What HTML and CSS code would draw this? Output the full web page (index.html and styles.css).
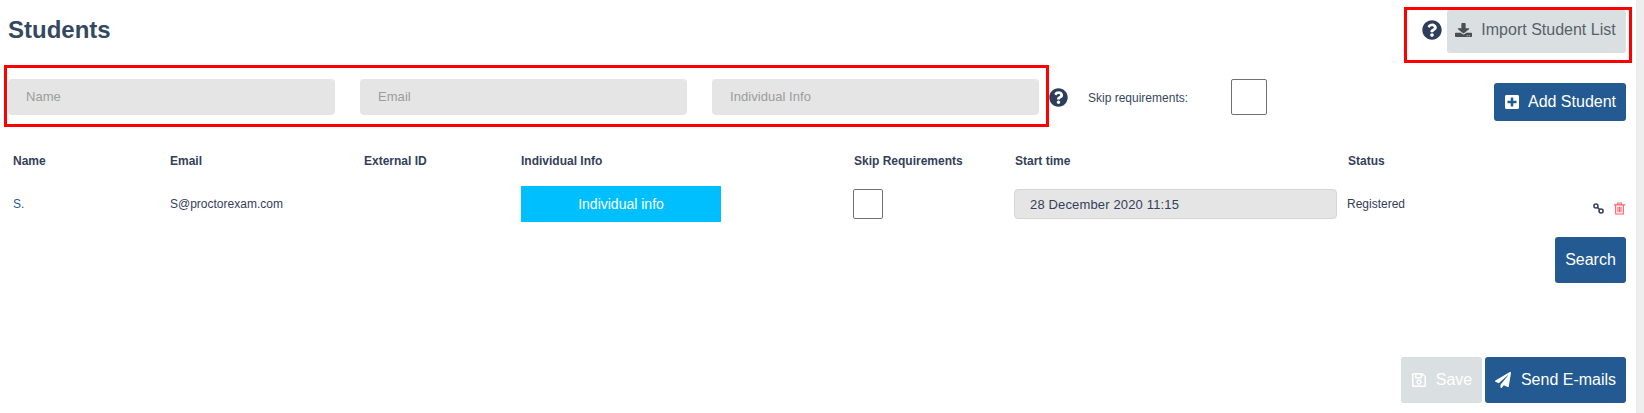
FILE: index.html
```html
<!DOCTYPE html>
<html lang="en">
<head>
  <meta charset="UTF-8" />
  <meta name="viewport" content="width=device-width, initial-scale=1.0"/>
  <title>Students</title>
  <link rel="stylesheet" href="styles.css">
</head>
<body>

<div class="page">
  <div class="content">

    <div class="top-row">
      <h1>Students</h1>
      <div class="import-group">
        <svg class="help-icon help-large" viewBox="0 0 512 512"><path d="M504 256c0 136.997-111.043 248-248 248S8 392.997 8 256C8 119.083 119.043 8 256 8s248 111.083 248 248zM262.655 90c-54.497 0-89.255 22.957-116.549 63.758-3.536 5.286-2.353 12.415 2.715 16.258l34.699 26.31c5.205 3.947 12.621 3.008 16.665-2.122 17.864-22.658 30.113-35.797 57.303-35.797 20.429 0 45.698 13.148 45.698 32.958 0 14.976-12.363 22.667-32.534 33.976C247.128 238.528 216 254.941 216 296v4c0 6.627 5.373 12 12 12h56c6.627 0 12-5.373 12-12v-1.333c0-28.462 83.186-29.647 83.186-106.667 0-58.002-60.165-102-116.531-102zM256 338c-25.365 0-46 20.635-46 46 0 25.364 20.635 46 46 46s46-20.636 46-46c0-25.365-20.635-46-46-46z"/></svg>
        <button class="btn btn-grey btn-import">
          <svg class="btn-icon icon-download" viewBox="0 0 512 512" preserveAspectRatio="none"><path d="M216 0h80c13.3 0 24 10.7 24 24v168h87.7c17.8 0 26.7 21.5 14.1 34.1L269.7 378.3c-7.5 7.5-19.8 7.5-27.3 0L90.1 226.1c-12.6-12.6-3.7-34.1 14.1-34.1H192V24c0-13.3 10.7-24 24-24zm296 376v112c0 13.3-10.7 24-24 24H24c-13.3 0-24-10.7-24-24V376c0-13.3 10.7-24 24-24h146.7l49 49c20.1 20.1 52.5 20.1 72.6 0l49-49H488c13.3 0 24 10.7 24 24zm-124 88c0-11-9-20-20-20s-20 9-20 20 9 20 20 20 20-9 20-20zm64 0c0-11-9-20-20-20s-20 9-20 20 9 20 20 20 20-9 20-20z"/></svg>
          Import Student List
        </button>
      </div>
    </div>

    <div class="filter-row">
      <input class="filter-input" type="text" placeholder="Name">
      <input class="filter-input" type="text" placeholder="Email">
      <input class="filter-input" type="text" placeholder="Individual Info">
      <svg class="help-icon help-small" viewBox="0 0 512 512"><path d="M504 256c0 136.997-111.043 248-248 248S8 392.997 8 256C8 119.083 119.043 8 256 8s248 111.083 248 248zM262.655 90c-54.497 0-89.255 22.957-116.549 63.758-3.536 5.286-2.353 12.415 2.715 16.258l34.699 26.31c5.205 3.947 12.621 3.008 16.665-2.122 17.864-22.658 30.113-35.797 57.303-35.797 20.429 0 45.698 13.148 45.698 32.958 0 14.976-12.363 22.667-32.534 33.976C247.128 238.528 216 254.941 216 296v4c0 6.627 5.373 12 12 12h56c6.627 0 12-5.373 12-12v-1.333c0-28.462 83.186-29.647 83.186-106.667 0-58.002-60.165-102-116.531-102zM256 338c-25.365 0-46 20.635-46 46 0 25.364 20.635 46 46 46s46-20.636 46-46c0-25.365-20.635-46-46-46z"/></svg>
      <span class="skip-label">Skip requirements:</span>
      <input class="check check-large" type="checkbox">
      <button class="btn btn-blue btn-add">
        <svg class="btn-icon" viewBox="0 0 448 512"><path d="M400 32H48C21.5 32 0 53.5 0 80v352c0 26.5 21.5 48 48 48h352c26.5 0 48-21.5 48-48V80c0-26.5-21.5-48-48-48zm-32 252c0 6.6-5.4 12-12 12h-92v92c0 6.6-5.4 12-12 12h-56c-6.6 0-12-5.4-12-12v-92H92c-6.6 0-12-5.4-12-12v-56c0-6.6 5.4-12 12-12h92v-92c0-6.6 5.4-12 12-12h56c6.6 0 12 5.4 12 12v92h92c6.6 0 12 5.4 12 12v56z"/></svg>
        Add Student
      </button>
    </div>

    <div class="students-grid">
      <div class="col-head">Name</div>
      <div class="col-head">Email</div>
      <div class="col-head">External ID</div>
      <div class="col-head">Individual Info</div>
      <div class="col-head">Skip Requirements</div>
      <div class="col-head">Start time</div>
      <div class="col-head">Status</div>
      <div></div>

      <div class="cell cell-name">S.</div>
      <div class="cell">S@proctorexam.com</div>
      <div class="cell"></div>
      <div class="cell"><button class="btn-info">Individual info</button></div>
      <div class="cell"><input class="check check-small" type="checkbox"></div>
      <div class="cell"><input class="date-input" type="text" value="28 December 2020 11:15" readonly></div>
      <div class="cell cell-status">Registered</div>
      <div class="cell cell-actions">
        <svg class="action-icon" viewBox="0 0 12 12" fill="none" stroke="#34405a" stroke-width="1.7"><circle cx="3.2" cy="3.2" r="2.2"/><circle cx="8.8" cy="8.8" r="2.2"/><path d="M4.6 4.6l2.8 2.8"/></svg>
        <svg class="action-icon" viewBox="0 0 12 14" fill="none" stroke="#ff5f6b" stroke-width="1.2"><path d="M0 3h12M1.800 3v10h8.400V3M4 3V1h4v2M4.300 5v6M6 5v6M7.700 5v6"/></svg>
      </div>
    </div>

    <div class="search-row">
      <button class="btn btn-blue btn-tall">Search</button>
    </div>

    <div class="footer-row">
      <button class="btn btn-grey btn-tall btn-save">
        <svg class="btn-icon" viewBox="0 0 448 512"><path d="M433.941 129.941l-83.882-83.882A48 48 0 0 0 316.118 32H48C21.49 32 0 53.49 0 80v352c0 26.51 21.49 48 48 48h352c26.51 0 48-21.49 48-48V163.882a48 48 0 0 0-14.059-33.941zM272 80v80H144V80h128zm122 352H54a6 6 0 0 1-6-6V86a6 6 0 0 1 6-6h42v104c0 13.255 10.745 24 24 24h176c13.255 0 24-10.745 24-24V83.882l78.243 78.243a6 6 0 0 1 1.757 4.243V426a6 6 0 0 1-6 6zM224 232c-48.523 0-88 39.477-88 88s39.477 88 88 88 88-39.477 88-88-39.477-88-88-88zm0 128c-22.056 0-40-17.944-40-40s17.944-40 40-40 40 17.944 40 40-17.944 40-40 40z"/></svg>
        Save
      </button>
      <button class="btn btn-blue btn-tall btn-send">
        <svg class="btn-icon" viewBox="0 0 512 512"><path d="M476 3.2L12.5 270.6c-18.1 10.4-15.8 35.6 2.2 43.2L121 358.4l287.3-253.2c5.5-4.9 13.3 2.6 8.6 8.3L176 407v80.5c0 23.6 28.5 32.9 42.5 15.8L282 426l124.6 52.2c14.2 6 30.4-2.9 33-18.2l72-432C515 7.8 493.3-6.8 476 3.2z"/></svg>
        Send E-mails
      </button>
    </div>

  </div>
  <div class="scrollbar"></div>

  <!-- red boxes drawn on top of the screenshot -->
  <div class="mark mark-filters"></div>
  <div class="mark mark-import"></div>
</div>

</body>
</html>
```

FILE: styles.css
```css
* {
  box-sizing: border-box;
}
body {
  margin: 0;
  background: white;
  font-family: "Liberation Sans", Arial, sans-serif;
  color: #34495e;
  overflow: hidden;
}
.page {
  position: relative;
  display: flex;
  height: 413px;
}
.content {
  flex: 1;
  padding: 10px 10px 0 8px;
}
.scrollbar {
  width: 8px;
  background: #eeeeee;
}

/* top */
.top-row {
  display: flex;
  justify-content: space-between;
  align-items: center;
  height: 43px;
}
h1 {
  margin: 0 0 3px;
  font-size: 24px;
  font-weight: bold;
  color: #34495e;
}
.import-group {
  display: flex;
  align-items: center;
  height: 100%;
}
.help-icon {
  display: block;
  fill: #2c3e5a;
}
.help-large {
  width: 20px;
  height: 20px;
  margin-right: 5px;
  margin-top: -3px;
}
.help-small {
  width: 19px;
  height: 19px;
  margin-left: 10px;
  flex: none;
}

/* buttons */
.btn {
  display: flex;
  align-items: center;
  justify-content: center;
  border: none;
  border-radius: 3px;
  padding: 0;
  font-family: inherit;
  font-size: 16px;
}
.btn-blue {
  background: #235a92;
  color: white;
  fill: white;
}
.btn-grey {
  background: #dadfe1;
  color: #56626b;
  fill: #4a4f52;
}
.btn-icon {
  width: 16px;
  height: 16px;
  flex: none;
}
.btn-import {
  width: 179px;
  height: 100%;
  padding-bottom: 4px;
  gap: 9px;
}
.icon-download {
  width: 17px;
  height: 14px;
  margin-left: -2px;
}
.btn-add {
  width: 132px;
  height: 38px;
  margin: 4px 0 0 auto;
  gap: 8px;
}
.btn-tall {
  height: 46px;
}

/* filters */
.filter-row {
  display: flex;
  align-items: flex-start;
  height: 42px;
  margin-top: 26px;
}
.filter-input {
  width: 327px;
  height: 36px;
  flex: none;
  margin-right: 25px;
  padding: 0 18px 2px;
  border: none;
  border-radius: 4px;
  background: #e5e5e5;
  font-family: inherit;
  font-size: 13px;
  letter-spacing: 0.05px;
}
.filter-input:nth-child(3) {
  margin-right: 0;
}
.filter-input::placeholder {
  color: #9c9c9c;
  opacity: 1;
}
.filter-row .help-icon {
  margin-top: 9px;
}
.skip-label {
  width: 143px;
  margin-left: 20px;
  font-size: 12px;
  line-height: 38px;
  flex: none;
}
.check {
  appearance: none;
  display: block;
  margin: 0;
  background: white;
  border: 1px solid #707070;
  border-radius: 2px;
  flex: none;
}
.check-large {
  width: 36px;
  height: 36px;
}
.check-small {
  width: 30px;
  height: 30px;
  margin: 3px 0 0 -1px;
}

/* table */
.students-grid {
  display: grid;
  grid-template-columns: 157px 194px 157px 333px 161px 333px 233px 45px;
  grid-template-rows: 20px 36px;
  row-gap: 15px;
  margin: 30px 0 0 5px;
  font-size: 12px;
  color: #34405a;
}
.col-head {
  font-weight: bold;
  line-height: 20px;
}
.cell {
  line-height: 36px;
}
.cell-name {
  color: #2a5a96;
}
.cell-status {
  margin-left: -1px;
}
.btn-info {
  display: block;
  width: 200px;
  height: 36px;
  padding: 0;
  border: none;
  background: #00bfff;
  color: white;
  font-family: inherit;
  font-size: 14px;
}
.date-input {
  display: block;
  width: 323px;
  height: 30px;
  margin: 3px 0 0 -1px;
  padding: 0 15px;
  border: 1px solid #d5d5d5;
  border-radius: 4px;
  background: #e5e5e5;
  color: #34405a;
  font-family: inherit;
  font-size: 13px;
  letter-spacing: 0.15px;
}
.cell-actions {
  display: flex;
  align-items: center;
  justify-content: flex-end;
  gap: 10px;
  padding: 9px 1px 0 0;
}
.action-icon {
  width: 11px;
  height: 13px;
}

/* bottom buttons */
.search-row {
  display: flex;
  justify-content: flex-end;
  margin-top: 15px;
}
.search-row .btn {
  width: 71px;
}
.footer-row {
  display: flex;
  justify-content: flex-end;
  gap: 3px;
  margin-top: 74px;
}
.btn-save {
  width: 81px;
  gap: 9px;
  color: white;
  fill: white;
}
.btn-send {
  width: 141px;
  gap: 10px;
}

/* annotations */
.mark {
  position: absolute;
  border: 3px solid #ff0000;
  pointer-events: none;
}
.mark-filters {
  left: 4px;
  top: 65px;
  width: 1045px;
  height: 62px;
}
.mark-import {
  left: 1404px;
  top: 7px;
  width: 228px;
  height: 56px;
}
```
